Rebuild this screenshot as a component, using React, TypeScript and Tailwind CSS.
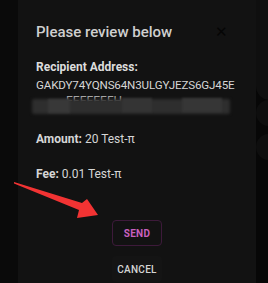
import React from 'react';

const RightStrip = () => (
  <div className="flex-1 bg-[#070707] flex flex-col gap-[8px]">
    <div className="h-[100px] bg-[#0f0f0f] rounded-bl-[14px]" />
    <div className="w-[26px] h-[26px] rounded-full bg-[#0e0e0e] -mt-[8px]" />
    <div className="w-[26px] h-[26px] rounded-full bg-[#0e0e0e]" />
  </div>
);

const App = () => {
  return (
    <div className="relative w-[268px] h-[283px] flex bg-[#0a0a0a] overflow-hidden" style={{ fontFamily: 'Roboto, sans-serif' }}>
      <div className="w-[18px] shrink-0 bg-[#0a0a0a]" />

      <div className="relative w-[238px] shrink-0 bg-[#121212] pl-[18px] pr-[14px] pt-[22px]">
        <div className="flex items-center justify-between h-[20px]">
          <h2 className="text-[15px] font-medium text-[#cfcfcf] leading-none">Please review below</h2>
          <span className="text-[#050505] text-[15px] leading-none mr-[14px]">✕</span>
        </div>

        <p className="mt-[18px] text-[12px] font-bold text-[#dcdcdc] leading-[14px]">Recipient Address:</p>
        <p className="mt-[4px] text-[11.6px] text-[#d6d6d6] leading-[14px] tracking-[-0.15px] whitespace-nowrap">GAKDY74YQNS64N3ULGYJEZS6GJ45E</p>

        {/* smudged second line */}
        <div className="relative mt-[2px] h-[20px] w-[198px] -ml-[4px]">
          <span className="absolute left-[34px] top-0 text-[12px] text-[#a8a8a8] leading-[14px]">EEEEEEFH</span>
          <div className="absolute left-0 right-0 top-[5px] bottom-0 bg-[#2e2e2e] blur-[1.5px] rounded-[2px]" />
          <div className="absolute left-[16px] w-[22px] top-[5px] bottom-[1px] bg-[#383838] blur-[1px]" />
          <div className="absolute left-[90px] w-[30px] top-[4px] bottom-[2px] bg-[#343434] blur-[1px]" />
          <div className="absolute left-[150px] w-[40px] top-[4px] bottom-[2px] bg-[#363636] blur-[1px]" />
        </div>

        <p className="mt-[18px] text-[12px] text-[#d6d6d6] leading-[14px]">
          <span className="font-bold">Amount:</span> 20 Test-π
        </p>
        <p className="mt-[21px] text-[12px] text-[#d6d6d6] leading-[14px]">
          <span className="font-bold">Fee:</span> 0.01 Test-π
        </p>

        <div className="mt-[39px] flex flex-col items-center pr-[4px]">
          <button className="w-[50px] h-[26px] border border-[#3d1a3a] rounded-[4px] text-[10px] font-bold text-[#c860be] tracking-[0.3px]">
            SEND
          </button>
          <button className="mt-[10px] w-[50px] h-[26px] rounded-[4px] bg-[#141414] text-[10px] font-medium text-[#d4d4d4] tracking-[0.3px]">
            CANCEL
          </button>
        </div>
      </div>

      <RightStrip />

      {/* annotation arrow */}
      <svg className="absolute left-[10px] top-[178px]" width="95" height="45" viewBox="0 0 95 45">
        <polygon points="4,4 72,25 77,21 88,37 67,40 69,32 4,5.5" fill="#f23333" />
      </svg>
    </div>
  );
};

export default App;
